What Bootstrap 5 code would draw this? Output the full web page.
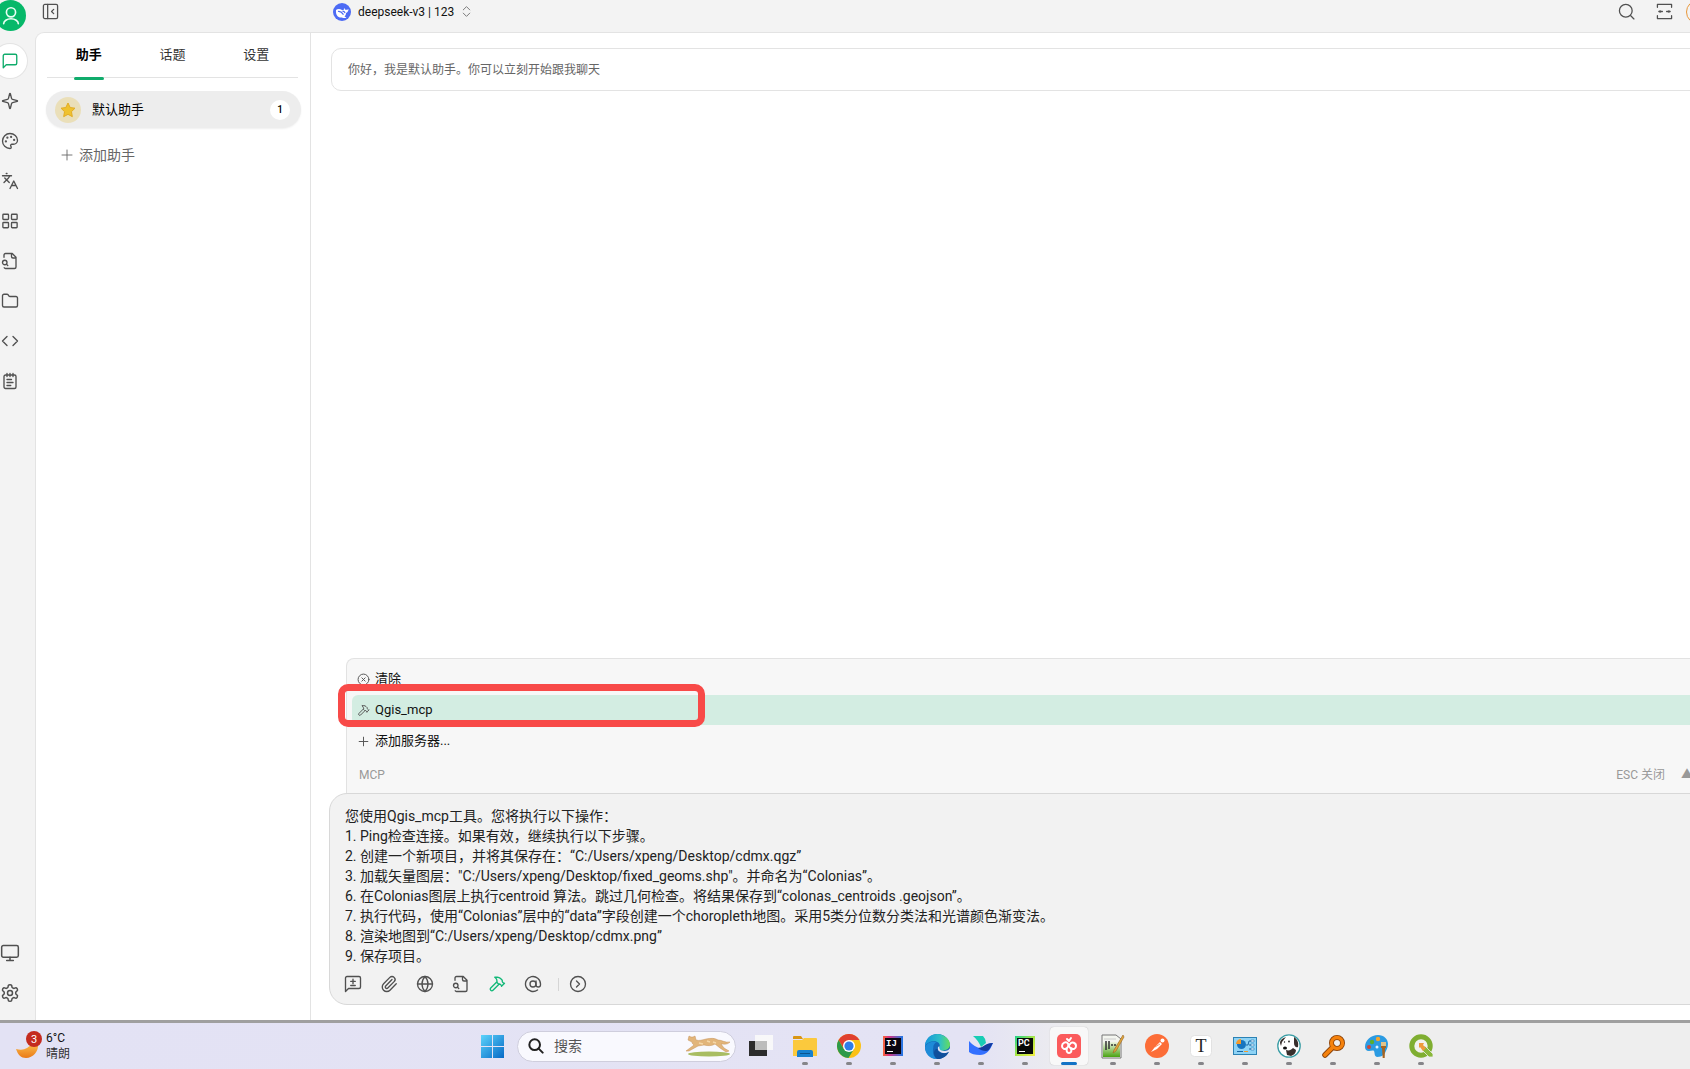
<!DOCTYPE html>
<html lang="zh-CN">
<head>
<meta charset="utf-8">
<meta name="viewport" content="width=device-width, initial-scale=1">
<title>默认助手</title>
<link rel="stylesheet" href="https://cdn.jsdelivr.net/npm/bootstrap@5.3.0/dist/css/bootstrap.min.css">
<style>
:root{--ui-green:#10ac6c;--ui-line:#e3e3e3;--ui-bg:#f3f3f3}
body{font-family:Roboto,"Noto Sans CJK SC",sans-serif;font-size:13px;line-height:20px;color:#111;background:var(--ui-bg)}
button,textarea,input{font-family:inherit}
.ico{fill:none;stroke:currentColor;stroke-width:1.8;stroke-linecap:round;stroke-linejoin:round;flex:none;display:block}
.bare{border:0;background:none;padding:0;color:#505050;display:flex;align-items:center;justify-content:center;flex:none}
.upper{min-height:0}
.rail{width:35px;padding-bottom:10px}
.rail .bare{width:34px;height:34px;margin-left:-7px;border-radius:50%}
.rail .stack{gap:6px}
.rail .bare.on{background:#fff;color:var(--ui-green);box-shadow:0 0 0 1px #e4e4e4}
.rail .me{width:31px;height:31px;margin:0 0 13px -5px;background:#06b869;color:#e9fff4}
.topbar{height:32px;padding-bottom:9px}
.left-head{width:275px;padding-left:7px}
.model{gap:7px;color:#111;font-size:12px;padding-left:23px}
.model .updown{color:#777;margin-left:-1px}
.tools-r{gap:21px;margin-right:-20px}
.avatar-o{width:24px;height:24px;border-radius:50%;border:1px solid #e8973a;margin-left:-8px}
.panes{border-top:1px solid var(--ui-line);border-left:1px solid var(--ui-line);border-top-left-radius:9px;background:#fff;min-height:0}
.side{width:275px;border-right:1px solid var(--ui-line);padding:0 9px 0 10px}
.tabs{margin:0 3px 0 1px;height:45px;border-bottom:1px solid var(--ui-line)}
.tabs button{flex:1 1 0;border:0;background:none;padding:0;color:#333;position:relative}
.tabs .active{font-weight:700;color:#000}
.tabs .active::after{content:"";position:absolute;left:50%;bottom:-3px;width:30px;height:3px;margin-left:-15px;border-radius:2px;background:var(--ui-green)}
.agent{height:37px;margin-top:13px;border:0;border-radius:19px;background:#ededed;padding:0 11px 0 9px;gap:11px;color:#000;text-align:left;box-shadow:0 1px 2px #0001}
.face{width:26px;height:26px;border-radius:50%;background:#eadfb9}
.count{width:20px;height:20px;border-radius:50%;background:#fff;font-size:10px;font-weight:500;line-height:20px;text-align:center}
.add-agent{margin-top:17px;padding:0 15px;gap:6px;font-size:14px;color:#666}
.chat{padding:15px 0 15px 18px;overflow:hidden}
.chat>*{margin-right:-30px}
.hello{margin-left:2px;height:43px;border:1px solid var(--ui-line);border-radius:10px;padding:1px 16px 0;font-size:12px;color:#666}
.quick{margin-left:17px;border:1px solid #e2e2e2;border-bottom:0;border-radius:8px 8px 0 0;background:#f7f7f7;padding:5px 5px 0;position:relative}
.quick .row-item{height:30px;margin-bottom:1px;padding:0 5px;gap:5px;width:100%;justify-content:flex-start;color:#555;border-radius:6px}
.quick .row-item span{color:#111}
.quick .sel{background:#d3ede2}
.quick .foot{height:36px;padding:0 0 0 7px;font-size:12px;color:#999}
.foot-keys{gap:16px;margin-right:-18px}
.mark-box{position:absolute;left:-9px;top:25px;width:367px;height:43px;border:7px solid #f84a48;border-radius:10px;pointer-events:none}
.composer{border:1px solid #d8d8d8;border-radius:18px;background:#f2f2f2;padding:12px 15px 11px}
.composer textarea{border:0;background:none;resize:none;outline:0;padding:0;width:100%;height:160px;font-size:14px;line-height:20px;color:#222;display:block;overflow:hidden}
.acts{gap:18px;height:27px;margin-left:-1px}
.acts .bare{width:18px;height:18px}
.acts .green{color:#12b878}
.split{width:1px;height:13px;background:#d5d5d5}
.acts-more{gap:10px;margin-left:-2px}
.task{height:49px;border-top:3px solid #9f9f9f;background:linear-gradient(90deg,#e3e2f4 0,#e4e3f4 58%,#eee 64%,#eee);overflow:hidden}
.weather{width:470px;padding-left:15px;gap:4px;font-size:12px;line-height:16px;color:#333}
.weather b{font-weight:400;color:#111;display:block}
.find{width:219px;height:31px;border:1px solid #cfcedd;border-radius:16px;background:#f9f9fe;padding:0 4px 0 10px;gap:10px;margin:0 3px 0 2px}
.find .ico{color:#222;stroke-width:3}
.find input{border:0;background:none;outline:0;padding:0;min-width:0;flex:1;font-size:14px;color:#555}
.find input::placeholder{color:#555;opacity:1}
.app{width:44px;height:46px;position:relative;margin:0;border:0;padding:0;background:none;flex:none;display:flex;align-items:center;justify-content:center}
.app.start{width:45px}
.app svg{position:relative}
.app.run::after{content:"";position:absolute;bottom:4px;left:19px;width:6px;height:3px;border-radius:2px;background:#858589}
.app.now::before{content:"";position:absolute;inset:4px 3px;background:#f8f8f8;border-radius:4px;box-shadow:0 0 1px #aaa}
.app.now::after{left:14px;width:16px;background:#1273c5}
</style>
<script src="https://cdn.jsdelivr.net/npm/bootstrap@5.3.0/dist/js/bootstrap.bundle.min.js"></script>
</head>
<body class="vh-100 overflow-hidden d-flex flex-column">

<div class="upper d-flex flex-grow-1">
  <nav class="rail d-flex flex-column flex-shrink-0" aria-label="主导航">
    <button class="bare me" aria-label="用户"><svg class="ico" width="22" height="22" viewBox="0 0 24 24"><circle cx="12" cy="8" r="5"/><path d="M4 20.500a8 5.500 0 0 1 16 0"/></svg></button>
    <div class="stack d-flex flex-column flex-grow-1">
      <button class="bare on" aria-label="聊天"><svg class="ico" width="18" height="18" viewBox="0 0 24 24"><path d="M21 15a2 2 0 0 1-2 2H7l-4 4V5a2 2 0 0 1 2-2h14a2 2 0 0 1 2 2z"/></svg></button>
      <button class="bare" aria-label="智能体"><svg class="ico" width="18" height="18" viewBox="0 0 24 24"><path d="M9.937 15.5A2 2 0 0 0 8.5 14.063l-6.135-1.582a.5.5 0 0 1 0-.962L8.500 9.936A2 2 0 0 0 9.937 8.500l1.582-6.135a.5.5 0 0 1 .963 0L14.063 8.500A2 2 0 0 0 15.500 9.937l6.135 1.581a.5.5 0 0 1 0 .964L15.500 14.063a2 2 0 0 0-1.437 1.437l-1.582 6.135a.5.5 0 0 1-.963 0z"/></svg></button>
      <button class="bare" aria-label="绘画"><svg class="ico" width="18" height="18" viewBox="0 0 24 24"><circle cx="13.500" cy="6.500" r=".6"/><circle cx="17.500" cy="10.500" r=".6"/><circle cx="8.500" cy="7.500" r=".6"/><circle cx="6.500" cy="12.500" r=".6"/><path d="M12 2C6.500 2 2 6.500 2 12s4.500 10 10 10c.926 0 1.648-.746 1.648-1.688 0-.437-.18-.835-.437-1.125-.29-.289-.438-.652-.438-1.125a1.640 1.640 0 0 1 1.668-1.668h1.996c3.051 0 5.555-2.503 5.555-5.554C21.965 6.012 17.461 2 12 2z"/></svg></button>
      <button class="bare" aria-label="翻译"><svg class="ico" width="18" height="18" viewBox="0 0 24 24"><path d="m5 8 6 6M4 14l6-6 2-3M2 5h12M7 2h1M22 22l-5-10-5 10M14 18h6"/></svg></button>
      <button class="bare" aria-label="小程序"><svg class="ico" width="18" height="18" viewBox="0 0 24 24"><rect x="2.500" y="3" width="7.500" height="7" rx="1"/><rect x="14" y="3" width="7.500" height="7" rx="1"/><rect x="14" y="14" width="7.500" height="7" rx="1"/><rect x="2.500" y="14" width="7.500" height="7" rx="1"/></svg></button>
      <button class="bare" aria-label="知识库"><svg class="ico" width="18" height="18" viewBox="0 0 24 24"><path d="M14 2v4a2 2 0 0 0 2 2h4M4.268 21a2 2 0 0 0 1.727 1H18a2 2 0 0 0 2-2V7l-5-5H6a2 2 0 0 0-2 2v3M9 18l-1.500-1.500"/><circle cx="5" cy="14" r="3"/></svg></button>
      <button class="bare" aria-label="文件"><svg class="ico" width="18" height="18" viewBox="0 0 24 24"><path d="M20 20a2 2 0 0 0 2-2V8a2 2 0 0 0-2-2h-7.900a2 2 0 0 1-1.690-.9L9.600 3.900A2 2 0 0 0 7.930 3H4a2 2 0 0 0-2 2v13a2 2 0 0 0 2 2Z"/></svg></button>
      <button class="bare" aria-label="代码"><svg class="ico" width="18" height="18" viewBox="0 0 24 24"><path d="m16 18 6-6-6-6M8 6l-6 6 6 6"/></svg></button>
      <button class="bare" aria-label="笔记"><svg class="ico" width="18" height="18" viewBox="0 0 24 24"><path d="M8 2v4M12 2v4M16 2v4M8 10h6M8 14h8M8 18h5"/><rect x="4" y="4" width="16" height="18" rx="2"/></svg></button>
      <button class="bare mt-auto" aria-label="显示"><svg class="ico" width="20" height="20" viewBox="0 0 24 24"><rect x="2" y="3" width="20" height="14" rx="2"/><path d="M8 21h8M12 17v4"/></svg></button>
      <button class="bare" aria-label="设置"><svg class="ico" width="20" height="20" viewBox="0 0 24 24"><path d="M12.220 2h-.44a2 2 0 0 0-2 2v.18a2 2 0 0 1-1 1.730l-.43.25a2 2 0 0 1-2 0l-.15-.08a2 2 0 0 0-2.730.73l-.22.38a2 2 0 0 0 .73 2.730l.15.1a2 2 0 0 1 1 1.720v.51a2 2 0 0 1-1 1.740l-.15.09a2 2 0 0 0-.73 2.730l.22.38a2 2 0 0 0 2.730.73l.15-.08a2 2 0 0 1 2 0l.43.25a2 2 0 0 1 1 1.730V20a2 2 0 0 0 2 2h.44a2 2 0 0 0 2-2v-.18a2 2 0 0 1 1-1.730l.43-.25a2 2 0 0 1 2 0l.15.08a2 2 0 0 0 2.730-.73l.22-.39a2 2 0 0 0-.73-2.730l-.15-.08a2 2 0 0 1-1-1.740v-.5a2 2 0 0 1 1-1.740l.15-.09a2 2 0 0 0 .73-2.730l-.22-.38a2 2 0 0 0-2.730-.73l-.15.08a2 2 0 0 1-2 0l-.43-.25a2 2 0 0 1-1-1.730V4a2 2 0 0 0-2-2z"/><circle cx="12" cy="12" r="3"/></svg></button>
    </div>
  </nav>

  <div class="d-flex flex-column flex-grow-1 overflow-hidden">
    <header class="topbar d-flex align-items-center flex-shrink-0">
      <div class="left-head flex-shrink-0"><button class="bare" aria-label="收起侧栏"><svg class="ico" width="17" height="17" viewBox="0 0 24 24"><rect x="2" y="2" width="20" height="20" rx="2"/><path d="M8 2v20M16.500 9l-3 3 3 3"/></svg></button></div>
      <button class="bare model">
        <svg width="18" height="18" viewBox="0 0 36 36"><circle cx="18" cy="18" r="18" fill="#4d6bf4"/><path fill="#fff" d="M6 14c3-3 8-3 12 0 3 1.500 4 0 4-4 1 1 2 2 2 3 2 1 4 1 7-1 0 4-2 7-5 8 0 3-1 5-3 7l4 2c-4 2-7 1-9 0-8 1-13-5-12-15z"/><path d="M10 17c4-1 8 2 11 6M19 17c2-1 4 0 5 3" fill="none" stroke="#4d6bf4" stroke-width="2.500"/></svg>
        <span>deepseek-v3 | 123</span>
        <svg class="ico updown" width="13" height="13" viewBox="0 0 24 24"><path d="m6 9 6-6 6 6M6 15l6 6 6-6"/></svg>
      </button>
      <div class="tools-r d-flex align-items-center ms-auto">
        <button class="bare" aria-label="搜索"><svg class="ico" width="17" height="17" viewBox="0 0 24 24"><circle cx="11" cy="11" r="9"/><path d="m18 18 4.500 4.500"/></svg></button>
        <button class="bare" aria-label="展开宽度"><svg class="ico" width="17" height="17" viewBox="0 0 24 24"><path d="M2 6V2h20v4M2 18v4h20v-4M4 12h5M15 12h5M6 11l-2 1 2 1M18 11l2 1-2 1"/></svg></button>
        <button class="bare avatar-o" aria-label="更多"></button>
      </div>
    </header>

    <div class="panes d-flex flex-grow-1">
      <aside class="side d-flex flex-column flex-shrink-0">
        <div class="tabs d-flex" role="tablist">
          <button class="active" role="tab" aria-selected="true">助手</button>
          <button role="tab">话题</button>
          <button role="tab">设置</button>
        </div>
        <button class="agent d-flex align-items-center">
          <span class="face d-flex align-items-center justify-content-center"><svg width="16" height="16" viewBox="0 0 24 24"><path d="m12 1.500 3.300 6.800 7.200 1-5.300 5.200 1.300 7.500-6.500-3.500L5.500 22l1.300-7.500L1.500 9.300l7.200-1z" fill="#efc22f" stroke="#e2ac25" stroke-width="1.500" stroke-linejoin="round"/></svg></span>
          <span class="flex-grow-1">默认助手</span>
          <span class="count">1</span>
        </button>
        <button class="bare add-agent align-self-start"><svg class="ico" width="12" height="12" viewBox="0 0 24 24"><path d="M12 2v20M2 12h20"/></svg>添加助手</button>
      </aside>

      <main class="chat d-flex flex-column flex-grow-1">
        <div class="hello d-flex align-items-center">你好，我是默认助手。你可以立刻开始跟我聊天</div>
        <div class="quick mt-auto">
          <button class="bare row-item"><svg class="ico" width="13" height="13" viewBox="0 0 24 24"><circle cx="12" cy="12" r="10"/><path d="m15 9-6 6M9 9l6 6"/></svg><span>清除</span></button>
          <button class="bare row-item sel"><svg class="ico" width="13" height="13" viewBox="0 0 24 24"><use href="#hammer"/></svg><span>Qgis_mcp</span></button>
          <button class="bare row-item"><svg class="ico" width="13" height="13" viewBox="0 0 24 24"><path d="M4 12h16M12 4v16"/></svg><span>添加服务器...</span></button>
          <div class="foot d-flex align-items-center justify-content-between"><span>MCP</span><span class="foot-keys d-flex"><span>ESC 关闭</span><span>▲▼ 选择</span></span></div>
          <div class="mark-box"></div>
        </div>
        <div class="composer">
          <textarea aria-label="消息" spellcheck="false">您使用Qgis_mcp工具。您将执行以下操作：
1. Ping检查连接。如果有效，继续执行以下步骤。
2. 创建一个新项目，并将其保存在：“C:/Users/xpeng/Desktop/cdmx.qgz”
3. 加载矢量图层："C:/Users/xpeng/Desktop/fixed_geoms.shp"。并命名为“Colonias”。
6. 在Colonias图层上执行centroid 算法。跳过几何检查。将结果保存到“colonas_centroids .geojson”。
7. 执行代码，使用“Colonias”层中的“data”字段创建一个choropleth地图。采用5类分位数分类法和光谱颜色渐变法。
8. 渲染地图到“C:/Users/xpeng/Desktop/cdmx.png”
9. 保存项目。</textarea>
          <div class="acts d-flex align-items-end">
            <button class="bare" aria-label="新话题"><svg class="ico" width="18" height="18" viewBox="0 0 24 24"><path d="M2 22V4a2 2 0 0 1 2-2h16a2 2 0 0 1 2 2v12a2 2 0 0 1-2 2H6zM12 5.500v6M9 8.500h6M9 14h6"/></svg></button>
            <button class="bare" aria-label="附件"><svg class="ico" width="18" height="18" viewBox="0 0 24 24"><path d="m16 6-8.414 8.586a2 2 0 0 0 2.829 2.829l8.414-8.586a4 4 0 1 0-5.657-5.657l-8.379 8.551a6 6 0 1 0 8.485 8.485l8.379-8.551"/></svg></button>
            <button class="bare" aria-label="联网"><svg class="ico" width="18" height="18" viewBox="0 0 24 24"><circle cx="12" cy="12" r="10"/><path d="M12 2a14.500 14.500 0 0 0 0 20 14.500 14.500 0 0 0 0-20M2 12h20"/></svg></button>
            <button class="bare" aria-label="知识库"><svg class="ico" width="18" height="18" viewBox="0 0 24 24"><path d="M14 2v4a2 2 0 0 0 2 2h4M4.268 21a2 2 0 0 0 1.727 1H18a2 2 0 0 0 2-2V7l-5-5H6a2 2 0 0 0-2 2v3M9 18l-1.500-1.500"/><circle cx="5" cy="14" r="3"/></svg></button>
            <button class="bare green" aria-label="MCP"><svg class="ico" width="18" height="18" viewBox="0 0 24 24"><g id="hammer"><path d="m15 12-8.373 8.373a1 1 0 1 1-3-3L12 9M18 15l4-4M21.500 11.500l-1.914-1.914A2 2 0 0 1 19 8.172V7l-2.260-2.260a6 6 0 0 0-4.202-1.756L9 2.960l.92.82A6.180 6.180 0 0 1 12 8.400V10l2 2h1.172a2 2 0 0 1 1.414.586L18.500 14.500"/></g></svg></button>
            <button class="bare" aria-label="提及模型"><svg class="ico" width="18" height="18" viewBox="0 0 24 24"><circle cx="12" cy="12" r="4"/><path d="M16 8v5a3 3 0 0 0 6 0v-1a10 10 0 1 0-4 8"/></svg></button>
            <div class="acts-more d-flex align-items-center"><i class="split"></i><button class="bare" aria-label="更多工具"><svg class="ico" width="18" height="18" viewBox="0 0 24 24"><circle cx="12" cy="12" r="10"/><path d="m10 8 4 4-4 4"/></svg></button></div>
          </div>
        </div>
      </main>
    </div>
  </div>
</div>

<footer class="task d-flex align-items-center flex-shrink-0">
  <div class="weather d-flex align-items-center flex-shrink-0">
    <svg width="27" height="30" viewBox="0 0 27 30"><defs><linearGradient id="mn" x1="0" y1="0" x2="0" y2="1"><stop offset="0" stop-color="#fcc04e"/><stop offset="1" stop-color="#ea7a18"/></linearGradient></defs><path d="M1 18c7 2 12 0 16-6l6 1c1 7-5 14-12 14-5 0-8-3-10-9z" fill="url(#mn)"/><circle cx="19" cy="8" r="8" fill="#c42b1f"/><text x="19" y="12" font-size="11" fill="#fff" text-anchor="middle">3</text></svg>
    <div><b>6°C</b>晴朗</div>
  </div>
  <button class="app start" aria-label="开始"><svg width="23" height="23" viewBox="0 0 23 23"><defs><linearGradient id="wn" gradientUnits="userSpaceOnUse" x1="0" y1="0" x2="23" y2="23"><stop offset="0" stop-color="#5bd3fb"/><stop offset="1" stop-color="#0669c6"/></linearGradient></defs><path fill="url(#wn)" d="M0 0h11v11H0zM12 0h11v11H12zM0 12h11v11H0zM12 12h11v11H12z"/></svg></button>
  <label class="find d-flex align-items-center flex-shrink-0">
    <svg class="ico" width="16" height="16" viewBox="0 0 24 24"><circle cx="10" cy="10" r="8"/><path d="m16 16 6 6"/></svg>
    <input type="text" placeholder="搜索" aria-label="搜索">
    <svg width="46" height="24" viewBox="0 0 46 24"><ellipse cx="24" cy="20" rx="21" ry="2.500" fill="#a8bd62"/><path d="M4 2l2 1h2l2-1 1 4c3 1 6 0 10-1 5-1 9-1 12 1 4 0 7 3 12 2-3 3-6 2-9 2l3 4 5 3-3 1-6-4-5-4c-3 2-7 2-11 1l-6 1-9 5H1l8-6c-2-1-2-3-2-3l-4-2z" fill="#e2b57a" stroke="#c4935a" stroke-width=".5"/><path d="M14 9l4 1M22 7l3 1M28 8l3 1" stroke="#f5d7a8" stroke-width="1.500"/></svg>
  </label>
  <button class="app" aria-label="任务视图"><svg width="24" height="24" viewBox="0 0 24 24"><path d="M0 7h18v15H0z" fill="#2c2c2c"/><path d="M6 1h18v15H6z" fill="#fafafa" opacity=".9"/><path d="M6 7h12v9H6z" fill="#bcbcbc"/></svg></button>
  <button class="app run" aria-label="文件资源管理器"><svg width="24" height="24" viewBox="0 0 24 24"><path d="M0 3q0-1 1-1h7l2 3H0z" fill="#d99613"/><path d="M0 6h9l2-2h12q1 0 1 1v17H0z" fill="#fbc93d"/><path d="M4 23v-5q0-2 2-2h12q2 0 2 2v5z" fill="#1681cf"/><path d="M7 19.500h10" stroke="#0a558f"/></svg></button>
  <button class="app run" aria-label="Chrome"><svg width="24" height="24" viewBox="0 0 24 24"><circle cx="12" cy="12" r="12" fill="#fbc116"/><path d="M1.600 6A12 12 0 0 1 22.400 6H12L7 15z" fill="#e0402f"/><path d="M1.600 6A12 12 0 0 0 11.500 24L17 15H6.800z" fill="#2d9a49"/><circle cx="12" cy="12" r="6" fill="#fff"/><circle cx="12" cy="12" r="4.600" fill="#2f7de9"/></svg></button>
  <button class="app run" aria-label="IntelliJ IDEA"><svg width="20" height="20" viewBox="0 0 20 20"><defs><linearGradient id="ij"><stop offset="0" stop-color="#f9683a"/><stop offset=".3" stop-color="#d8317f"/><stop offset="1" stop-color="#1f78e6"/></linearGradient></defs><path fill="url(#ij)" d="M0 0h20v20H0z"/><path d="M2 2h16v16H2z" fill="#0b0610"/><text x="3" y="10" font-size="9" font-weight="700" font-family="Liberation Mono" fill="#fff">IJ</text><path d="M4 15.500h6" stroke="#fff"/></svg></button>
  <button class="app run" aria-label="Edge"><svg width="25" height="25" viewBox="0 0 24 24"><defs><linearGradient id="eg"><stop offset="0" stop-color="#1595dc"/><stop offset=".6" stop-color="#2fc0c5"/><stop offset="1" stop-color="#66dd5b"/></linearGradient></defs><circle cx="12" cy="12" r="12" fill="#1467b8"/><path d="M0 12C0 4 6 0 12 0s12 5 12 10c0 4-4 6-8 6-3 0-3-2-2-3 1-4-2-6-5-6-4 0-8 2-9 5z" fill="url(#eg)"/><path d="M8 13c0-3 2-5 4-5-6-2-11 1-12 5 0 5 4 11 11 11-3-3-4-6-3-11z" fill="#1e8bd8"/><path d="M14 12c-1 3 2 5 6 4 2 0 3-1 4-2v3c-3 2-8 2-11-1-1-2-1-4 1-4z" fill="#e4e3f4"/><path d="M12 14c0 4 5 6 11 3-2 4-6 7-11 7-4-2-5-9 0-10z" fill="#104f9b"/></svg></button>
  <button class="app run" aria-label="飞书"><svg width="24" height="22" viewBox="0 0 24 22"><path d="M4 1h10q3 3 3 7l-5 4Q9 5 4 1z" fill="#18cdb5"/><path d="M0 6q7 8 14 7c4-4 6-5 10-5-3 8-7 12-13 12-5 0-9-1-11-3z" fill="#3370ff"/><path d="M9 13c5 0 7-5 15-5-3 4-3 8-7 8-3 0-6-1-8-3z" fill="#143c9d"/></svg></button>
  <button class="app run" aria-label="PyCharm"><svg width="20" height="20" viewBox="0 0 20 20"><defs><linearGradient id="py" x2="1" y2="1"><stop offset="0" stop-color="#1fd18a"/><stop offset=".5" stop-color="#a8e646"/><stop offset="1" stop-color="#f4ee42"/></linearGradient></defs><path fill="url(#py)" d="M0 0h20v20H0z"/><path d="M2 2h16v16H2z" fill="#080a08"/><text x="3" y="10" font-size="9" font-weight="700" fill="#fff">PC</text><path d="M4 15.500h6" stroke="#fff"/></svg></button>
  <button class="app run now" aria-label="Cherry Studio"><svg width="24" height="24" viewBox="0 0 24 24"><rect width="24" height="24" rx="5" fill="#fb5b5c"/><path d="M11 9.500C9 7 5 9 5 12s3 4 5 2l3-4c2-3 6-1 6 2s-3 4-5 2M10 14c-1 3 0 5 2 5s3-2 2-4l-3-4M10 5l2 2 2-3" fill="none" stroke="#fff" stroke-width="2" stroke-linecap="round" stroke-linejoin="round"/></svg></button>
  <button class="app run" aria-label="Notepad++"><svg width="24" height="25" viewBox="0 0 24 25"><defs><linearGradient id="np" x2="0" y2="1"><stop offset="0" stop-color="#eef5e2"/><stop offset="1" stop-color="#4aa312"/></linearGradient></defs><path d="M1 1h14l5 4v19H1z" fill="#f3f5ef" stroke="#777"/><path d="M2 8h17v15H2z" fill="url(#np)"/><path d="M3 5h12" stroke="#ccc"/><path d="M5 7v9M8 7v8M10 11h2M13 11h2" stroke="#333" stroke-width="1.500"/><path d="m22 1-9 15-1 3 3-2 8-14z" fill="#e2a63a" stroke="#966321" stroke-width=".6"/></svg></button>
  <button class="app run" aria-label="Postman"><svg width="24" height="24" viewBox="0 0 24 24"><circle cx="12" cy="12" r="12" fill="#fc6d37"/><path d="M6 18l4-5 5-5 2 2-5 5z" fill="#fff"/><circle cx="17.500" cy="6.500" r="2" fill="#fff"/><path d="m10 13 5-3" stroke="#fc6d37" stroke-width=".7"/></svg></button>
  <button class="app run" aria-label="Typora"><svg width="22" height="22" viewBox="0 0 22 22"><rect x=".5" y=".5" width="21" height="21" rx="4" fill="#fff" stroke="#e2e2e2"/><text x="11" y="17" text-anchor="middle" font-family="Liberation Serif" font-size="18" fill="#222">T</text></svg></button>
  <button class="app run" aria-label="控制面板"><svg width="24" height="20" viewBox="0 0 24 20"><rect x=".5" y="1.500" width="23" height="17" fill="#8ed3f5" stroke="#2c82b4"/><circle cx="8.500" cy="8.500" r="4.500" fill="#1875bf"/><path d="M8 8V3A5 5 0 0 0 3 8z" fill="#f49a2a"/><path d="M13 9h2l1-4h2M16 9h2M16 13h2M4 15.500h6" stroke="#1b67a4" fill="none"/><path d="M11 15.500h4" stroke="#f49a2a"/><path d="M18 4h3v2h-3zM18 8h3v2h-3zM18 12h3v2h-3z" fill="#e4f5fe" stroke="#1b67a4" stroke-width=".5"/></svg></button>
  <button class="app run" aria-label="DBeaver"><svg width="24" height="24" viewBox="0 0 24 24"><circle cx="12" cy="12" r="11.200" fill="#fff" stroke="#3a9da5" stroke-width="1.300"/><path d="M3 9c0-3 3-5 6-6L5 8l-1 4zM17 3c3 2 5 5 4 10-2 1-4-1-4-4zM9 16c3 1 5 0 7-2l3 2c0 3-2 5-5 6l-4-1z" fill="#382f2c"/><ellipse cx="8" cy="14" rx="2" ry="1.500" fill="#111"/><circle cx="12" cy="7.500" r=".9" fill="#222"/><circle cx="7.500" cy="8" r=".7" fill="#222"/></svg></button>
  <button class="app run" aria-label="Everything"><svg width="23" height="23" viewBox="0 0 23 23"><circle cx="15" cy="8" r="5.500" fill="none" stroke="#8a4108" stroke-width="5"/><path d="M11 12 3 20" stroke="#8a4108" stroke-width="5.500" stroke-linecap="round"/><circle cx="15" cy="8" r="5.500" fill="none" stroke="#f5820d" stroke-width="3.400"/><path d="M11 12 3 20" stroke="#f5820d" stroke-width="3.800" stroke-linecap="round"/></svg></button>
  <button class="app run" aria-label="画图"><svg width="24" height="25" viewBox="0 0 24 25"><path d="M13 1c6 0 10 4 10 9 0 4-2 6-3 9-2 3-5 4-8 4-3-1-2-4-3-6-1-1-3 0-5 0-3 0-4-2-4-4C0 6 6 1 13 1z" fill="#2b9be2"/><circle cx="7" cy="8" r="2.200" fill="#59ae32"/><circle cx="13" cy="5" r="2.200" fill="#f5a52a"/><circle cx="4" cy="13" r="2" fill="#cf4538"/><circle cx="12" cy="13" r="1.500" fill="#dff2ff"/><path d="M16 8h5v6h-1l-.3 10h-2L17 14h-1z" fill="#a66421"/><path d="M16 8h5v4h-5z" fill="#dfc28b"/></svg></button>
  <button class="app run" aria-label="QGIS"><svg width="24" height="24" viewBox="0 0 24 24"><circle cx="12" cy="12" r="9.200" fill="#f1f1ee" stroke="#7fae31" stroke-width="5"/><path d="m13 13 3-1 8 8v3h-4l-7-7z" fill="#8ab83a" stroke="#eee" stroke-width=".8"/><path d="M10 9h5l-1 2 3 3-3 3-3-4-1 1z" fill="#ee9a3c"/></svg></button>
</footer>
</body>
</html>
